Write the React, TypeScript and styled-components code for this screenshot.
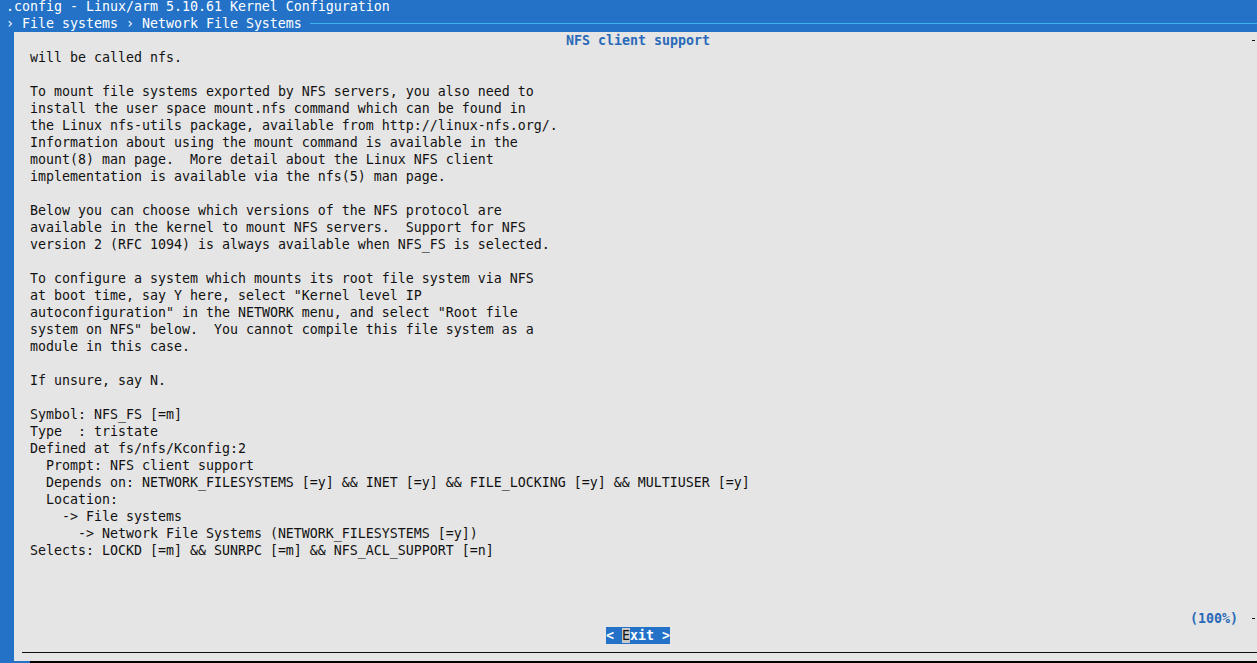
import styled, { createGlobalStyle } from "styled-components";

const CELL_W = 8;
const CELL_H = 17;

const GlobalStyle = createGlobalStyle`
  html, body {
    margin: 0;
    padding: 0;
    overflow: hidden;
    background: #2372c7;
  }
`;

const Screen = styled.div`
  width: 1265px;
  height: 680px;
  margin: -2px 0 0 -2px;
  background: #2372c7;
  font-family: "DejaVu Sans Mono", "Liberation Mono", monospace;
  font-size: 13.29px;
  line-height: ${CELL_H}px;
  color: #111;
  display: flex;
  flex-direction: column;
`;

const HeaderLine = styled.div`
  height: ${CELL_H}px;
  padding-left: ${CELL_W}px;
  color: #fff;
  white-space: pre;
  display: flex;
  align-items: center;
`;

const Rule = styled.div<{ color: string }>`
  flex: 1;
  height: 1px;
  background: ${(p) => p.color};
`;

const Body = styled.div`
  display: flex;
  height: ${CELL_H * 37}px;
  padding-left: ${CELL_W * 2}px;
`;

const Panel = styled.div`
  flex: 1;
  background: #e5e5e5;
  display: flex;
  flex-direction: column;
`;

const Row = styled.div<{ indent: number }>`
  height: ${CELL_H}px;
  padding-left: ${(p) => p.indent * CELL_W}px;
  white-space: pre;
  display: flex;
  align-items: center;
`;

const Title = styled.span`
  color: #2a6ab9;
  font-weight: bold;
`;

const Percent = styled.span`
  color: #2a6ab9;
  font-weight: bold;
`;

const Tick = styled.span`
  margin-left: auto;
  margin-right: 8px;
  width: 3px;
  height: 1px;
  background: #111;
`;

const Spacer = styled.div`
  flex: 1;
`;

const Button = styled.span`
  background: #2372c7;
  color: #fff;
  font-weight: bold;
  white-space: pre;
`;

const HotKey = styled.span`
  background: #c8c8c8;
  color: #111;
  font-weight: normal;
`;

const Bottom = styled.div`
  display: flex;
  height: ${CELL_H}px;
  padding-left: ${CELL_W * 4}px;
`;

const Shadow = styled.div`
  flex: 1;
  background: #000;
`;

const helpText = [
  "will be called nfs.",
  "",
  "To mount file systems exported by NFS servers, you also need to",
  "install the user space mount.nfs command which can be found in",
  "the Linux nfs-utils package, available from http://linux-nfs.org/.",
  "Information about using the mount command is available in the",
  "mount(8) man page.  More detail about the Linux NFS client",
  "implementation is available via the nfs(5) man page.",
  "",
  "Below you can choose which versions of the NFS protocol are",
  "available in the kernel to mount NFS servers.  Support for NFS",
  "version 2 (RFC 1094) is always available when NFS_FS is selected.",
  "",
  "To configure a system which mounts its root file system via NFS",
  'at boot time, say Y here, select "Kernel level IP',
  'autoconfiguration" in the NETWORK menu, and select "Root file',
  'system on NFS" below.  You cannot compile this file system as a',
  "module in this case.",
  "",
  "If unsure, say N.",
  "",
  "Symbol: NFS_FS [=m]",
  "Type  : tristate",
  "Defined at fs/nfs/Kconfig:2",
  "  Prompt: NFS client support",
  "  Depends on: NETWORK_FILESYSTEMS [=y] && INET [=y] && FILE_LOCKING [=y] && MULTIUSER [=y]",
  "  Location:",
  "    -> File systems",
  "      -> Network File Systems (NETWORK_FILESYSTEMS [=y])",
  "Selects: LOCKD [=m] && SUNRPC [=m] && NFS_ACL_SUPPORT [=n]",
];

const App = () => {
  return (
    <>
      <GlobalStyle />
      <Screen>
        <HeaderLine>.config - Linux/arm 5.10.61 Kernel Configuration</HeaderLine>
        <HeaderLine>
          {"› File systems › Network File Systems "}
          <Rule color="#3db3ee" />
        </HeaderLine>
        <Body>
          <Panel>
            <Row indent={69}>
              <Title>NFS client support</Title>
              <Tick />
            </Row>
            {helpText.map((line, i) => (
              <Row key={i} indent={2}>
                {line}
              </Row>
            ))}
            <Spacer />
            <Row indent={147}>
              <Percent>(100%)</Percent>
              <Tick />
            </Row>
            <Row indent={74}>
              <Button>
                {"< "}
                <HotKey>E</HotKey>
                {"xit >"}
              </Button>
            </Row>
            <Row indent={1}>
              <Rule color="#111" />
            </Row>
          </Panel>
        </Body>
        <Bottom>
          <Shadow />
        </Bottom>
      </Screen>
    </>
  );
};

export default App;
